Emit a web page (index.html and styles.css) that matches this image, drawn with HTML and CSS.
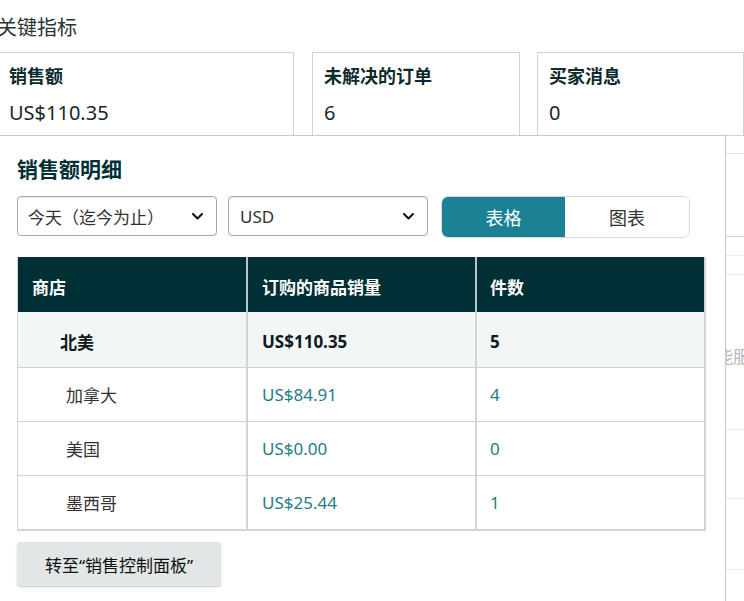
FILE: index.html
```html
<!DOCTYPE html>
<html lang="zh-CN">
<head>
<meta charset="utf-8">
<title>关键指标</title>
<link rel="stylesheet" href="styles.css">
</head>
<body>
<div class="page">
  <h2 class="title">关键指标</h2>
  <div class="cards">
    <div class="card card-wide">
      <div class="card-label">销售额</div>
      <div class="card-value">US$110.35</div>
    </div>
    <div class="card card-mid">
      <div class="card-label">未解决的订单</div>
      <div class="card-value">6</div>
    </div>
    <div class="card card-last">
      <div class="card-label">买家消息</div>
      <div class="card-value">0</div>
    </div>
  </div>
  <div class="lower">
    <div class="side">
      <div class="side-row s1"></div>
      <div class="side-row s2"></div>
      <div class="side-row s3"></div>
      <div class="side-row s4"></div>
      <div class="side-row s5"><span class="side-text">能服</span></div>
      <div class="side-row s6"></div>
      <div class="side-row s7"></div>
      <div class="side-row s8"></div>
    </div>
  </div>

  <div class="popup">
    <h3 class="popup-title">销售额明细</h3>
    <div class="controls">
      <div class="select">
        <span>今天（迄今为止）</span>
        <svg class="chev" width="11" height="7" viewBox="0 0 11 7"><path d="M1 1l4.5 4.5L10 1" fill="none" stroke="#0f1111" stroke-width="2" stroke-linecap="round" stroke-linejoin="round"/></svg>
      </div>
      <div class="select select-2">
        <span>USD</span>
        <svg class="chev" width="11" height="7" viewBox="0 0 11 7"><path d="M1 1l4.5 4.5L10 1" fill="none" stroke="#0f1111" stroke-width="2" stroke-linecap="round" stroke-linejoin="round"/></svg>
      </div>
      <div class="toggle">
        <span class="seg seg-active">表格</span>
        <span class="seg">图表</span>
      </div>
    </div>

    <div class="grid" role="table">
      <div class="trow thead" role="row">
        <div class="cell c1" role="columnheader">商店</div>
        <div class="cell c2" role="columnheader">订购的商品销量</div>
        <div class="cell c3" role="columnheader">件数</div>
      </div>
      <div class="trow total r-a" role="row">
        <div class="cell c1 name-main" role="cell">北美</div>
        <div class="cell c2" role="cell">US$110.35</div>
        <div class="cell c3" role="cell">5</div>
      </div>
      <div class="trow sub r-b" role="row">
        <div class="cell c1 name-sub" role="cell">加拿大</div>
        <div class="cell c2 num" role="cell">US$84.91</div>
        <div class="cell c3 num" role="cell">4</div>
      </div>
      <div class="trow sub r-b" role="row">
        <div class="cell c1 name-sub" role="cell">美国</div>
        <div class="cell c2 num" role="cell">US$0.00</div>
        <div class="cell c3 num" role="cell">0</div>
      </div>
      <div class="trow sub r-last" role="row">
        <div class="cell c1 name-sub" role="cell">墨西哥</div>
        <div class="cell c2 num" role="cell">US$25.44</div>
        <div class="cell c3 num" role="cell">1</div>
      </div>
    </div>

    <button class="goto" type="button">转至“销售控制面板”</button>
  </div>
</div>
</body>
</html>
```

FILE: styles.css
```css
* { box-sizing: border-box; }

html, body {
  margin: 0;
  padding: 0;
  background: #fff;
}

body {
  width: 744px;
  height: 601px;
  overflow: hidden;
  font-family: "Noto Sans", "Noto Sans CJK SC", sans-serif;
  color: #0f1111;
}

.page {
  position: relative;
  margin-left: -3px;
  width: 747px;
  height: 601px;
  padding-top: 14px;
}

.title {
  margin: 0;
  font-size: 20px;
  font-weight: 400;
  line-height: 28px;
  color: #2b3435;
}

.cards {
  display: flex;
  margin-top: 10px;
}

.card {
  height: 84px;
  border: 1px solid #cfd3d3;
  padding: 11px 0 0 11px;
}

.card-wide { width: 297px; }
.card-mid { width: 208px; margin-left: 18px; }
.card-last { width: 207px; margin-left: 17px; }

.card-label {
  font-size: 18px;
  font-weight: 700;
  line-height: 24px;
  color: #0d2a2e;
}

.card-value {
  margin-top: 11px;
  font-size: 20px;
  line-height: 28px;
  color: #17282a;
}

/* background content peeking out at the right */
.lower {
  display: flex;
  justify-content: flex-end;
}

.side {
  width: 28px;
  overflow: hidden;
}

.side-row { border-top: 1px solid #eceeee; }
.s1 { height: 17px; border-top: 0; }
.s2 { height: 83px; border-top-color: #e0e3e3; }
.s3 { height: 19px; border-top-color: #cdd1d1; }
.s4 { height: 19px; }
.s5 { height: 155px; padding-top: 70px; }
.s6 { height: 69px; }
.s7 { height: 71px; }
.s8 { height: 40px; }

.side-text {
  display: block;
  white-space: nowrap;
  font-size: 17px;
  line-height: 24px;
  color: #b3b7b7;
}

/* overlay popup */
.popup {
  position: absolute;
  top: 135px;
  left: 1px;
  width: 728px;
  height: 490px;
  background: #fff;
  border: 1px solid #c6caca;
  padding: 19px 19px 0 18px;
}

.popup-title {
  margin: 0;
  font-size: 21px;
  font-weight: 700;
  line-height: 28px;
  color: #002f36;
}

.controls {
  display: flex;
  align-items: flex-start;
  margin-top: 13px;
}

.select {
  width: 200px;
  height: 40px;
  border: 1px solid #a3a8a8;
  border-radius: 4px;
  display: flex;
  align-items: center;
  justify-content: space-between;
  padding: 0 13px 0 10px;
  font-size: 17px;
  color: #2f3333;
  background: #fff;
  box-shadow: inset 0 1px 1px rgba(15, 17, 17, 0.06);
}

.select-2 {
  margin-left: 11px;
  padding-left: 11px;
}

.chev { display: block; }

.toggle {
  margin-left: 13px;
  width: 249px;
  height: 42px;
  border: 1px solid #d5d9d9;
  border-radius: 7px;
  overflow: hidden;
  display: grid;
  grid-template-columns: 123px 1fr;
}

.seg {
  display: flex;
  align-items: center;
  justify-content: center;
  font-size: 18px;
  color: #333;
  background: #fff;
}

.seg-active {
  background: #1a8294;
  color: #fff;
}

/* table */
.grid {
  margin-top: 19px;
  width: 689px;
  border-left: 1px solid #d0d4d4;
  border-right: 2px solid #d0d4d4;
  border-bottom: 2px solid #d0d4d4;
}

.trow {
  display: grid;
  grid-template-columns: 228px 229px 229px;
}

.cell {
  display: flex;
  align-items: center;
  font-size: 17px;
  white-space: nowrap;
}

.c2, .c3 { border-left: 2px solid #d0d4d4; }
.c2 { padding-left: 14px; }
.c3 { padding-left: 13px; }

.thead {
  height: 55px;
  background: #002f36;
}

.thead .cell {
  color: #fff;
  font-weight: 700;
  padding-top: 4px;
}

.thead .c1 { padding-left: 14px; }
.thead .c2, .thead .c3 { border-left-color: #b9c6c8; }

.total {
  height: 56px;
  background: #f3f6f6;
  border-bottom: 1px solid #d0d4d4;
  font-weight: 700;
}

.total .cell {
  font-weight: 700;
  color: #0f1a1c;
  padding-top: 4px;
}

.r-b {
  height: 54px;
  border-bottom: 1px solid #d0d4d4;
}

.r-last { height: 53px; }

.name-main { padding-left: 42px; }
.name-sub { padding-left: 48px; color: #333; }

.num { color: #1f7c8a; }

.goto {
  display: block;
  margin-top: 11px;
  width: 204px;
  height: 44px;
  border: 0;
  border-radius: 3px;
  background: #e3e6e6;
  box-shadow: 0 1px 2px rgba(15, 17, 17, 0.22);
  font-family: inherit;
  font-size: 17px;
  color: #0f1111;
  padding: 0;
  cursor: pointer;
}
```
